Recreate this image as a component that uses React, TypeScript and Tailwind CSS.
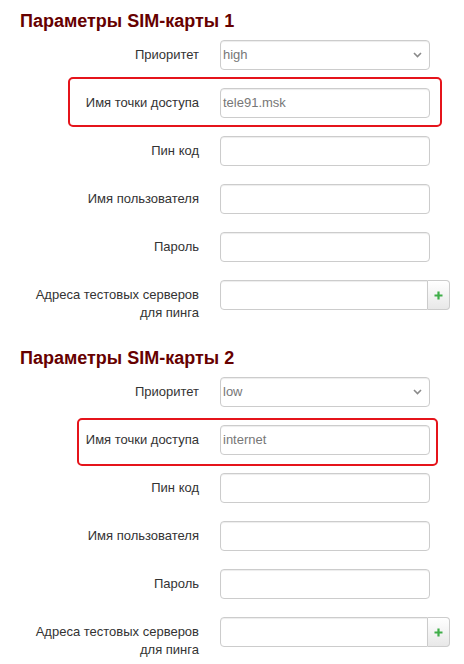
import React from "react";

type Field = {
  label: string[];
  kind: "select" | "input" | "group";
  value?: string;
};

const fields = (priority: string, apn: string): Field[] => [
  { label: ["Приоритет"], kind: "select", value: priority },
  { label: ["Имя точки доступа"], kind: "input", value: apn },
  { label: ["Пин код"], kind: "input" },
  { label: ["Имя пользователя"], kind: "input" },
  { label: ["Пароль"], kind: "input" },
  { label: ["Адреса тестовых серверов", "для пинга"], kind: "group" },
];

function Control({ f }: { f: Field }) {
  if (f.kind === "select") {
    return (
      <div className="flex h-[30px] w-[210px] items-center justify-between rounded-[4px] border border-[#cccccc] bg-white pl-[2px] pr-[7px] text-[13px] text-[#777777] shadow-[inset_0_1px_1px_rgba(0,0,0,0.075)]">
        <span>{f.value}</span>
        <svg width="9" height="6" viewBox="0 0 9 6">
          <path d="M1 1l3.5 3.5L8 1" fill="none" stroke="#8a8a8a" strokeWidth="1.6" />
        </svg>
      </div>
    );
  }
  if (f.kind === "group") {
    return (
      <div className="flex h-[30px] w-[230px]">
        <div className="h-full flex-1 rounded-l-[4px] border border-[#cccccc] bg-white shadow-[inset_0_1px_1px_rgba(0,0,0,0.075)]" />
        <div className="flex h-full w-[22px] items-center justify-center rounded-r-[4px] border border-l-0 border-[#cccccc] bg-gradient-to-b from-white to-[#e8e8e8]">
          <svg width="9" height="9" viewBox="0 0 9 9">
            <path d="M4.5 0.5v8M0.5 4.5h8" stroke="#3fae49" strokeWidth="2.2" />
          </svg>
        </div>
      </div>
    );
  }
  return (
    <div className="flex h-[30px] w-[210px] items-center rounded-[4px] border border-[#cccccc] bg-white pl-[2px] text-[13px] text-[#777777] shadow-[inset_0_1px_1px_rgba(0,0,0,0.075)]">
      {f.value}
    </div>
  );
}

function Section({
  title,
  priority,
  apn,
  box,
}: {
  title: string;
  priority: string;
  apn: string;
  box: string;
}) {
  return (
    <section>
      <h2 className="ml-[20px] mb-[9px] text-[18px] font-bold leading-[20px] text-[#660000]">{title}</h2>
      <div className="flex flex-col gap-[18px]">
        {fields(priority, apn).map((f, i) => (
          <div key={i} className="relative flex items-start">
            {i === 1 && <div className={box} />}
            <div className="w-[199px] pt-[6px] text-right text-[13px] leading-[18px] text-[#333333]">
              {f.label.map((l) => (
                <div key={l}>{l}</div>
              ))}
            </div>
            <div className="ml-[21px]">
              <Control f={f} />
            </div>
          </div>
        ))}
      </div>
    </section>
  );
}

export default function App() {
  return (
    <div className="min-h-[664px] w-[464px] bg-white pt-[11px] font-['Liberation_Sans',Arial,sans-serif]">
      <Section
        title="Параметры SIM-карты 1"
        priority="high"
        apn="tele91.msk"
        box="pointer-events-none absolute left-[68px] top-[-11px] h-[50px] w-[374px] rounded-[5px] border-2 border-[#e5141b]"
      />
      <div className="h-[26px]" />
      <Section
        title="Параметры SIM-карты 2"
        priority="low"
        apn="internet"
        box="pointer-events-none absolute left-[77px] top-[-7px] h-[48px] w-[361px] rounded-[5px] border-2 border-[#e5141b]"
      />
    </div>
  );
}
